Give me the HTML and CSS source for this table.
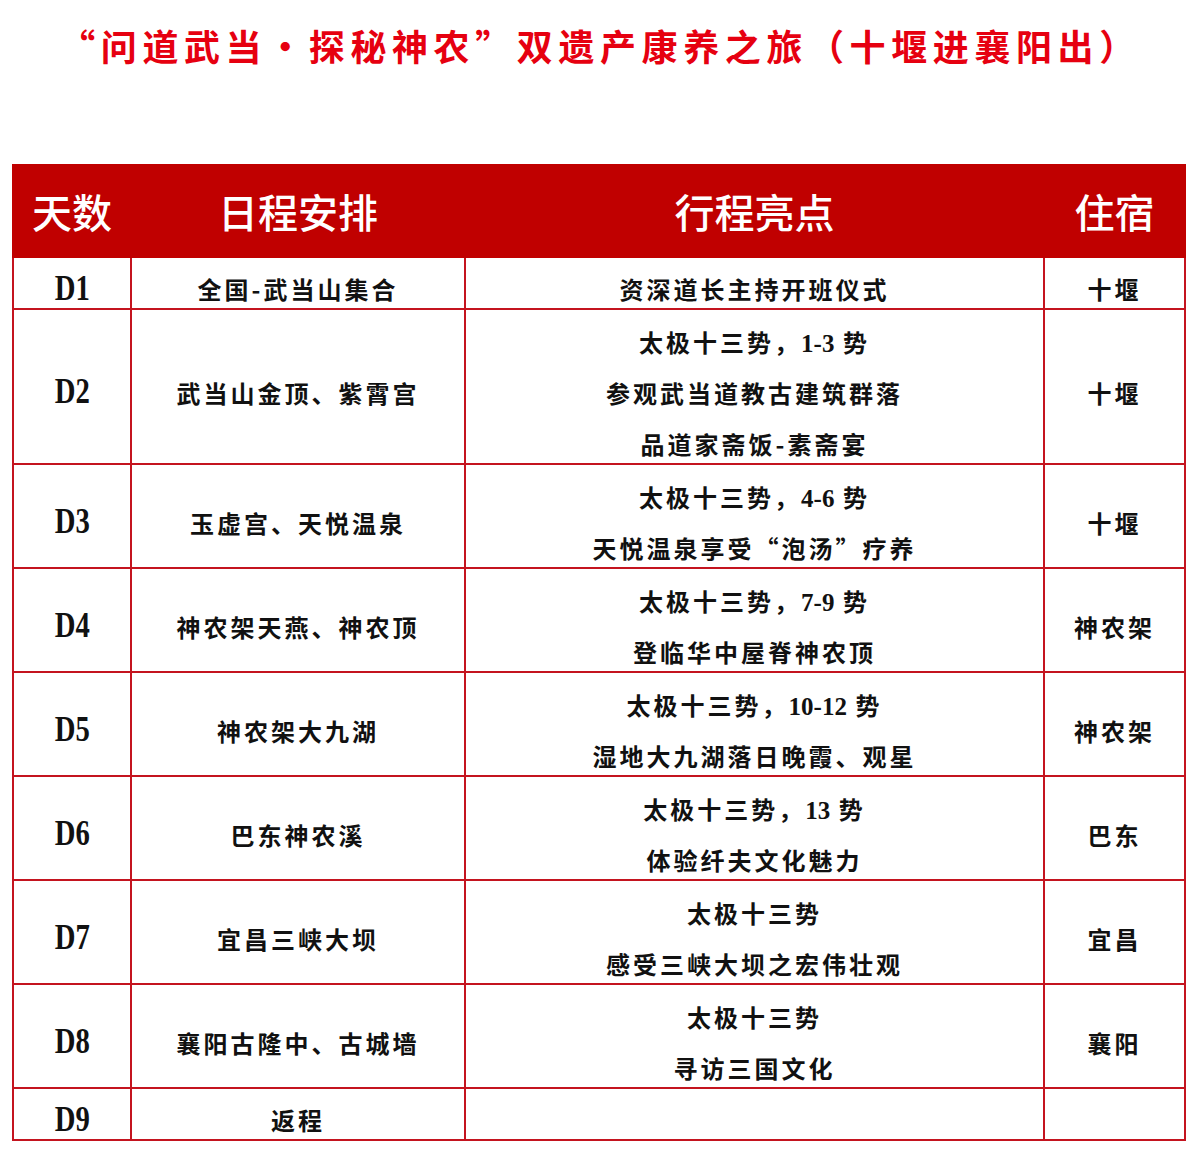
FILE: index.html
```html
<!DOCTYPE html>
<html lang="zh-CN">
<head>
<meta charset="utf-8">
<title>问道武当·探秘神农</title>
<link rel="stylesheet" href="styles.css">
</head>
<body>
<h1 class="title">“问道武当•探秘神农”双遗产康养之旅（十堰进襄阳出）</h1>
<table class="plan">
  <colgroup>
    <col class="c-day"><col class="c-sched"><col class="c-high"><col class="c-stay">
  </colgroup>
  <thead>
    <tr class="head"><th>天数</th><th>日程安排</th><th>行程亮点</th><th>住宿</th></tr>
  </thead>
  <tbody>
    <tr class="r1">
      <td><div class="cell day"><span class="dl">D1</span></div></td>
      <td><div class="cell">全国-武当山集合</div></td>
      <td><div class="cell">资深道长主持开班仪式</div></td>
      <td><div class="cell">十堰</div></td>
    </tr>
    <tr class="r3">
      <td><div class="cell day"><span class="dl">D2</span></div></td>
      <td><div class="cell">武当山金顶、紫霄宫</div></td>
      <td><div class="cell">太极十三势，<span class="num">1-3</span> 势<br>参观武当道教古建筑群落<br>品道家斋饭-素斋宴</div></td>
      <td><div class="cell">十堰</div></td>
    </tr>
    <tr class="r2">
      <td><div class="cell day"><span class="dl">D3</span></div></td>
      <td><div class="cell">玉虚宫、天悦温泉</div></td>
      <td><div class="cell">太极十三势，<span class="num">4-6</span> 势<br>天悦温泉享受“泡汤”疗养</div></td>
      <td><div class="cell">十堰</div></td>
    </tr>
    <tr class="r2">
      <td><div class="cell day"><span class="dl">D4</span></div></td>
      <td><div class="cell">神农架天燕、神农顶</div></td>
      <td><div class="cell">太极十三势，<span class="num">7-9</span> 势<br>登临华中屋脊神农顶</div></td>
      <td><div class="cell">神农架</div></td>
    </tr>
    <tr class="r2">
      <td><div class="cell day"><span class="dl">D5</span></div></td>
      <td><div class="cell">神农架大九湖</div></td>
      <td><div class="cell">太极十三势，<span class="num">10-12</span> 势<br>湿地大九湖落日晚霞、观星</div></td>
      <td><div class="cell">神农架</div></td>
    </tr>
    <tr class="r2">
      <td><div class="cell day"><span class="dl">D6</span></div></td>
      <td><div class="cell">巴东神农溪</div></td>
      <td><div class="cell">太极十三势，<span class="num">13</span> 势<br>体验纤夫文化魅力</div></td>
      <td><div class="cell">巴东</div></td>
    </tr>
    <tr class="r2">
      <td><div class="cell day"><span class="dl">D7</span></div></td>
      <td><div class="cell">宜昌三峡大坝</div></td>
      <td><div class="cell">太极十三势<br>感受三峡大坝之宏伟壮观</div></td>
      <td><div class="cell">宜昌</div></td>
    </tr>
    <tr class="r2">
      <td><div class="cell day"><span class="dl">D8</span></div></td>
      <td><div class="cell">襄阳古隆中、古城墙</div></td>
      <td><div class="cell">太极十三势<br>寻访三国文化</div></td>
      <td><div class="cell">襄阳</div></td>
    </tr>
    <tr class="r1">
      <td><div class="cell day"><span class="dl">D9</span></div></td>
      <td><div class="cell">返程</div></td>
      <td></td>
      <td></td>
    </tr>
  </tbody>
</table>
</body>
</html>
```

FILE: styles.css
```css
html, body {
  margin: 0;
  padding: 0;
  background: #ffffff;
}
body {
  font-family: "Noto Sans CJK SC", "Noto Sans", sans-serif;
}
.title {
  margin: 0;
  padding-top: 22px;
  height: 164px;
  box-sizing: border-box;
  text-align: center;
  font-size: 36px;
  line-height: 46px;
  font-weight: 700;
  letter-spacing: 5.6px;
  color: #e60010;
}
.plan {
  margin-left: 12px;
  width: 1172px;
  border-collapse: collapse;
  table-layout: fixed;
  border: 2px solid #c4141f;
}
.c-day { width: 118px; }
.c-sched { width: 334px; }
.c-high { width: 579px; }
.c-stay { width: 141px; }
.plan th {
  height: 90px;
  background: #c00000;
  color: #ffffff;
  font-size: 40px;
  line-height: 50px;
  font-weight: 500;
  letter-spacing: 0;
  border: 2px solid #c00000;
  padding: 0;
  text-align: center;
  vertical-align: middle;
}
.plan td {
  border: 2px solid #c4141f;
  padding: 0;
  text-align: center;
  vertical-align: middle;
  font-family: "Noto Sans CJK SC", sans-serif;
  font-weight: 700;
  font-size: 24px;
  line-height: 51px;
  letter-spacing: 3px;
  color: #111111;
}
.cell {
  margin-top: 6px;
  margin-bottom: -6px;
}
.num {
  font-family: "Liberation Serif", serif;
  font-size: 25px;
  line-height: 1;
  letter-spacing: 0;
}
.day {
  letter-spacing: 0;
  line-height: 40px;
  margin-top: 3px;
  margin-bottom: -3px;
}
.dl {
  display: inline-block;
  vertical-align: middle;
  font-family: "Liberation Serif", serif;
  font-size: 35px;
  line-height: 36px;
  font-weight: 700;
  color: #111111;
  transform: scaleX(0.82);
}
.r1 td { height: 50px; }
.r1 .cell { line-height: 50px; }
.r1 .day { line-height: 40px; }
.r2 td { height: 102px; }
.r3 td { height: 153px; }
```
